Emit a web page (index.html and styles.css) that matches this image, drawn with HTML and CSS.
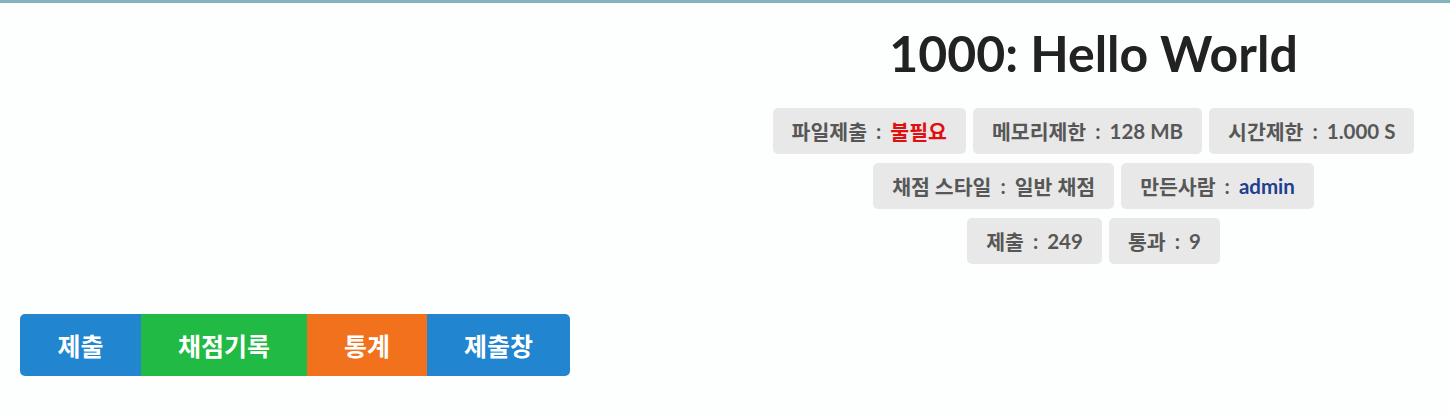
FILE: index.html
```html
<!DOCTYPE html>
<html lang="ko">
<head>
<meta charset="utf-8">
<link rel="stylesheet" href="styles.css">
</head>
<body>
<div class="topbar"></div>
<div class="page">
  <div class="head">
    <div class="left"></div>
    <div class="info">
      <h1 class="title">1000: Hello World</h1>
      <div class="labels">
        <span class="label">파일제출<span class="sep">:</span><span class="red">불필요</span></span>
        <span class="label">메모리제한<span class="sep">:</span>128 MB</span>
        <span class="label">시간제한<span class="sep">:</span>1.000 S</span>
      </div>
      <div class="labels">
        <span class="label">채점 스타일<span class="sep">:</span>일반 채점</span>
        <span class="label">만든사람<span class="sep">:</span><span class="blue">admin</span></span>
      </div>
      <div class="labels">
        <span class="label">제출<span class="sep">:</span>249</span>
        <span class="label">통과<span class="sep">:</span>9</span>
      </div>
    </div>
  </div>
  <div class="buttons">
    <a class="btn b-blue w1">제출</a>
    <a class="btn b-green w2">채점기록</a>
    <a class="btn b-orange w3">통계</a>
    <a class="btn b-blue w4">제출창</a>
  </div>
</div>
</body>
</html>
```
FILE: styles.css
```css
html, body {
  margin: 0;
  padding: 0;
  background: #fdfefe;
  font-family: Lato, "Noto Sans CJK KR", sans-serif;
}
.topbar {
  height: 3px;
  background: #88b1c0;
}
.page {
  padding: 0 0 0 20px;
}
.head {
  display: grid;
  grid-template-columns: 717px 1fr;
}
.info {
  display: flex;
  flex-direction: column;
  align-items: center;
}
.title {
  margin: 21px 0 26px;
  font-size: 50px;
  line-height: 58px;
  font-weight: 700;
  color: #222;
}
.labels {
  display: flex;
  justify-content: center;
  gap: 7px;
  margin-bottom: 9px;
}
.label {
  display: inline-flex;
  align-items: center;
  height: 46px;
  padding: 0 19px;
  background: #e8e8e8;
  border-radius: 5px;
  color: #575757;
  font-size: 20.5px;
  font-weight: 700;
  box-sizing: border-box;
}
.sep {
  margin: 0 9px;
}
.red { color: #e01010; }
.blue { color: #1f3f8f; }
.buttons {
  display: flex;
  margin-top: 41px;
  width: 550px;
  height: 62px;
  border-radius: 5px;
  overflow: hidden;
}
.btn {
  display: flex;
  align-items: center;
  justify-content: center;
  color: #fff;
  font-size: 25px;
  font-weight: 700;
}
.b-blue { background: #2185d0; }
.b-green { background: #21ba45; }
.b-orange { background: #f2711c; }
.w1 { width: 121px; }
.w2 { width: 166px; }
.w3 { width: 120px; }
.w4 { width: 143px; }
```
